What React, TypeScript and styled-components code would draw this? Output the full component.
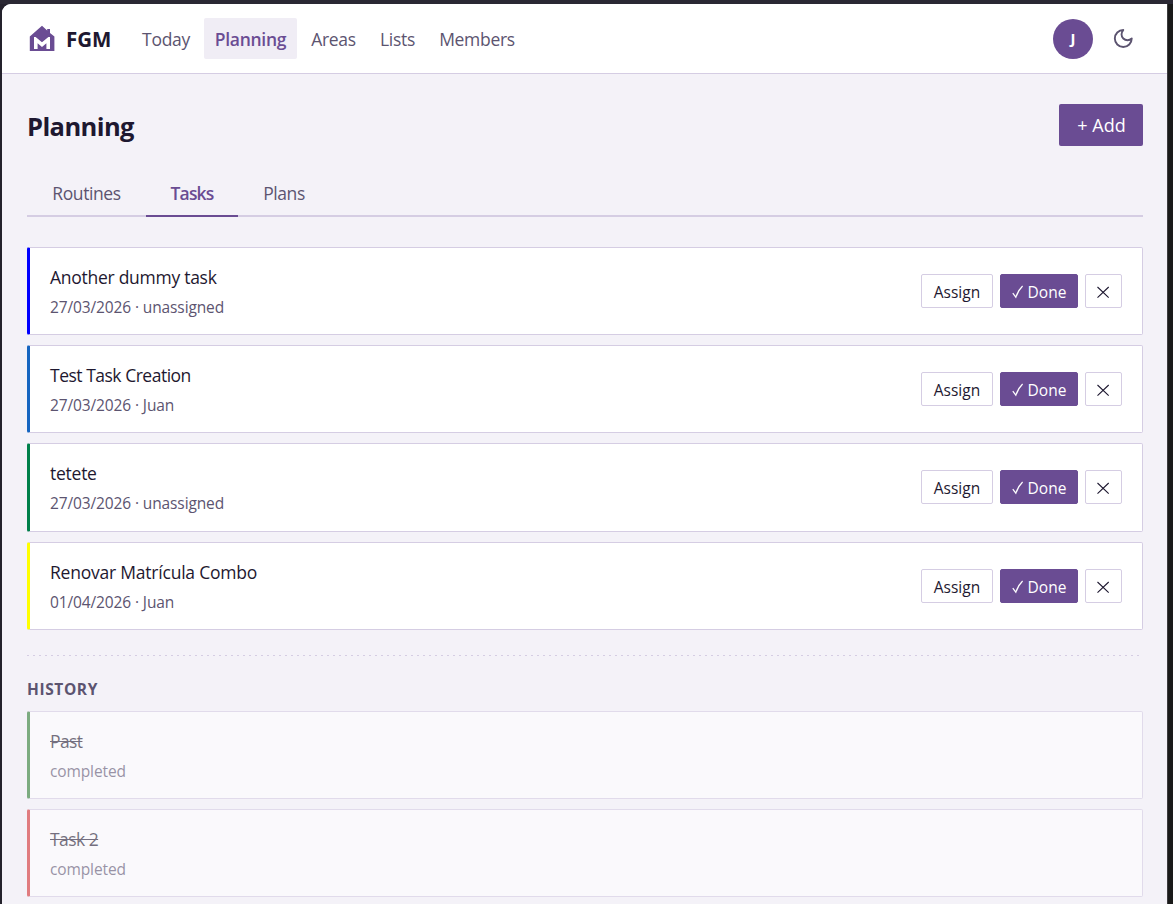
import React from 'react';
import styled, { createGlobalStyle } from 'styled-components';

const color = {
  accent: '#6a4c93',
  text: '#1e1830',
  muted: '#5c5470',
  border: '#d5cde3',
  page: '#f4f2f8',
  tint: '#f0edf5',
};

const GlobalStyle = createGlobalStyle`
  * { box-sizing: border-box; }
  html, body { margin: 0; height: 100%; overflow: hidden; }
  body {
    background: #1a1a1a;
    color: ${color.text};
    font-family: 'Open Sans', 'Noto Sans', sans-serif;
  }
  button { font-family: inherit; margin: 0; }
`;

const Backdrop = styled.div`
  height: 904px;
  width: 1173px;
  padding: 0 5px 0 2px;
  background: linear-gradient(to right, #24222c 0 1167px, #3c3c3e 1167px 1168px, #1a1a19 1168px);
  overflow: hidden;
`;

const TopEdge = styled.div`
  height: 4px;
  margin: 0 -5px 0 -2px;
  background: #2a2833;
`;

const Window = styled.div`
  height: 900px;
  margin-right: 1px;
  background: ${color.page};
  border-radius: 9px 0 0 0;
  overflow: hidden;
`;

const Header = styled.header`
  display: flex;
  align-items: center;
  height: 70px;
  padding: 0 33px 0 26px;
  background: #fff;
  border-bottom: 1px solid ${color.border};
`;

const Brand = styled.div`
  display: flex;
  align-items: center;
  gap: 10px;
  width: 104px;
  font-size: 20.5px;
  font-weight: 700;
  letter-spacing: -0.1px;
`;

const Nav = styled.nav`
  display: flex;
  gap: 4px;
  flex: 1;
`;

const NavLink = styled.a<{ $width: number; $active?: boolean }>`
  display: flex;
  align-items: center;
  justify-content: center;
  width: ${p => p.$width}px;
  height: 41px;
  border-radius: 2px;
  font-size: 17.5px;
  letter-spacing: -0.3px;
  white-space: nowrap;
  color: ${p => (p.$active ? color.accent : color.muted)};
  font-weight: ${p => (p.$active ? 600 : 400)};
  background: ${p => (p.$active ? color.tint : 'transparent')};
`;

const Avatar = styled.div`
  display: grid;
  place-items: center;
  width: 40px;
  height: 40px;
  margin-right: 17px;
  padding-bottom: 2px;
  border-radius: 50%;
  background: ${color.accent};
  color: #fff;
  font-size: 15px;
  font-weight: 700;
`;

const Main = styled.main`
  padding: 30px 24px 0 25px;
`;

const TitleRow = styled.div`
  display: flex;
  align-items: center;
  justify-content: space-between;
  height: 42px;
`;

const Title = styled.h1`
  margin: 0;
  padding-top: 2px;
  font-size: 25.5px;
  line-height: 36px;
  font-weight: 700;
  letter-spacing: -0.6px;
`;

const AddButton = styled.button`
  width: 84px;
  height: 42px;
  padding: 0 0 0 1px;
  border: 0;
  border-radius: 2px;
  background: ${color.accent};
  color: #fff;
  font-size: 18px;
`;

const Tabs = styled.div`
  display: flex;
  height: 46px;
  margin: 25px 0 30px;
  border-bottom: 2px solid ${color.border};
`;

const Tab = styled.button<{ $width: number; $active?: boolean }>`
  width: ${p => p.$width}px;
  height: 46px;
  padding: 0;
  border: 0;
  border-bottom: 2px solid ${p => (p.$active ? color.accent : 'transparent')};
  background: none;
  font-size: 17.5px;
  letter-spacing: ${p => (p.$active ? '-0.85px' : '-0.4px')};
  font-weight: ${p => (p.$active ? 600 : 400)};
  color: ${p => (p.$active ? color.accent : color.muted)};
`;

const CardList = styled.div`
  display: flex;
  flex-direction: column;
  gap: 10px;
`;

const Card = styled.article<{ $stripe: string; $done?: boolean }>`
  display: flex;
  align-items: center;
  justify-content: space-between;
  height: 88.2px;
  padding: 0 20px;
  background: #fff;
  border: 1px solid ${color.border};
  border-left: 3px solid ${p => p.$stripe};
  border-radius: 2px;
  opacity: ${p => (p.$done ? 0.6 : 1)};
`;

const CardText = styled.div`
  padding-top: 3px;
`;

const CardTitle = styled.div<{ $done?: boolean; $tracking: number }>`
  margin-bottom: 1px;
  font-size: 17.5px;
  line-height: 29px;
  letter-spacing: ${p => p.$tracking}px;
  text-decoration: ${p => (p.$done ? 'line-through' : 'none')};
`;

const CardMeta = styled.div`
  font-size: 15.5px;
  line-height: 29px;
  letter-spacing: -0.12px;
  color: ${color.muted};
`;

const Actions = styled.div`
  display: flex;
  gap: 7px;
`;

const ActionButton = styled.button<{ $width: number; $primary?: boolean }>`
  display: flex;
  align-items: center;
  justify-content: center;
  gap: 4px;
  width: ${p => p.$width}px;
  height: 34px;
  padding: 2px 0 0;
  border: 1px solid ${p => (p.$primary ? color.accent : color.border)};
  border-radius: 2px;
  background: ${p => (p.$primary ? color.accent : '#fff')};
  color: ${p => (p.$primary ? '#fff' : color.text)};
  font-size: 15.5px;
`;

const Divider = styled.div`
  height: 1px;
  margin: 25px 0 22px;
  background: repeating-linear-gradient(to right, ${color.border} 0 2px, transparent 2px 6px);
`;

const SectionLabel = styled.h2`
  margin: 0 0 10px;
  font-size: 15.5px;
  line-height: 23px;
  font-weight: 700;
  letter-spacing: 0.6px;
  color: ${color.muted};
`;

const HouseLogo = () => (
  <svg width="28" height="28" viewBox="0 0 28 28">
    <path d="M14 0.8 L19.2 5.4 V4 H22 V8 L26.4 11.4 V26 H1.8 V11.4 Z" fill={color.accent} />
    <path d="M6 12 H7.6 L14 17.2 L20.4 12 H22 V24 H18.4 V18.2 L14 22 L9.6 18.2 V24 H6 Z" fill="#fff" />
  </svg>
);

const MoonIcon = () => (
  <svg width="24" height="24" viewBox="0 0 24 24" fill="none" stroke={color.muted} strokeWidth="2" strokeLinejoin="round">
    <path transform="translate(2 0.2) scale(0.94)" d="M12 3a6 6 0 0 0 9 9 9 9 0 1 1-9-9Z" />
  </svg>
);

const CheckMark = () => (
  <svg width="12" height="14" viewBox="0 0 12 14" fill="none" stroke="#fff" strokeWidth="1.2">
    <path d="M0.8 8.2 L3.8 12.2 Q6 5.5 10.6 1" />
  </svg>
);

const CrossMark = () => (
  <svg width="14" height="12" viewBox="0 0 14 12" fill="none" stroke={color.text} strokeWidth="1.1">
    <path d="M0.5 1 L11.7 11.6 M11.7 1 L0.5 11.6" />
  </svg>
);

const tasks = [
  { title: 'Another dummy task', meta: '27/03/2026 · unassigned', stripe: '#0000ff', tracking: -0.27 },
  { title: 'Test Task Creation', meta: '27/03/2026 · Juan', stripe: '#1565c0', tracking: -0.49 },
  { title: 'tetete', meta: '27/03/2026 · unassigned', stripe: '#00804a', tracking: -0.25 },
  { title: 'Renovar Matrícula Combo', meta: '01/04/2026 · Juan', stripe: '#ffff00', tracking: -0.22 },
];

const history = [
  { title: 'Past', stripe: '#2e7d32', tracking: -0.6 },
  { title: 'Task 2', stripe: '#d32f2f', tracking: -0.55 },
];

export default function App() {
  return (
    <>
      <GlobalStyle />
      <Backdrop>
        <TopEdge />
        <Window>
          <Header>
            <Brand><HouseLogo />FGM</Brand>
            <Nav>
              <NavLink $width={68}>Today</NavLink>
              <NavLink $width={93} $active>Planning</NavLink>
              <NavLink $width={65}>Areas</NavLink>
              <NavLink $width={55}>Lists</NavLink>
              <NavLink $width={96}>Members</NavLink>
            </Nav>
            <Avatar>J</Avatar>
            <MoonIcon />
          </Header>
          <Main>
            <TitleRow>
              <Title>Planning</Title>
              <AddButton>+ Add</AddButton>
            </TitleRow>
            <Tabs>
              <Tab $width={119}>Routines</Tab>
              <Tab $width={92} $active>Tasks</Tab>
              <Tab $width={92}>Plans</Tab>
            </Tabs>
            <CardList>
              {tasks.map(t => (
                <Card key={t.title} $stripe={t.stripe}>
                  <CardText>
                    <CardTitle $tracking={t.tracking}>{t.title}</CardTitle>
                    <CardMeta>{t.meta}</CardMeta>
                  </CardText>
                  <Actions>
                    <ActionButton $width={72}>Assign</ActionButton>
                    <ActionButton $width={78} $primary><CheckMark />Done</ActionButton>
                    <ActionButton $width={37} aria-label="Remove"><CrossMark /></ActionButton>
                  </Actions>
                </Card>
              ))}
            </CardList>
            <Divider />
            <SectionLabel>HISTORY</SectionLabel>
            <CardList>
              {history.map(t => (
                <Card key={t.title} $stripe={t.stripe} $done>
                  <CardText>
                    <CardTitle $done $tracking={t.tracking}>{t.title}</CardTitle>
                    <CardMeta>completed</CardMeta>
                  </CardText>
                </Card>
              ))}
            </CardList>
          </Main>
        </Window>
      </Backdrop>
    </>
  );
}
